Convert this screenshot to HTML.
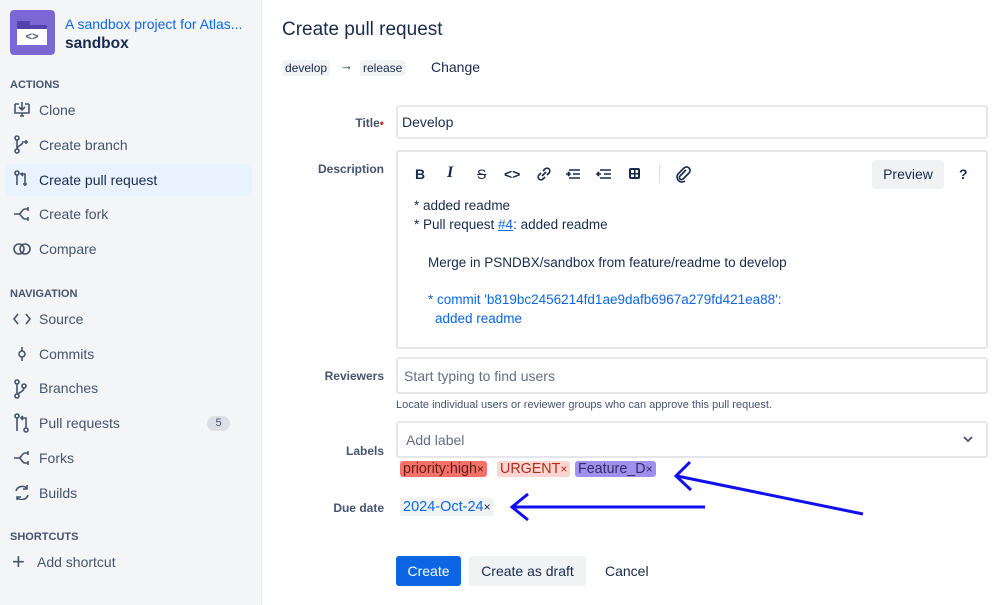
<!DOCTYPE html>
<html><head><style>
*{margin:0;padding:0;box-sizing:border-box}
body{width:999px;height:605px;overflow:hidden;background:#fff;font-family:"Liberation Sans",Arial,sans-serif;color:#172b4d;position:relative}
.a{position:absolute}
#side{position:absolute;left:0;top:0;width:262px;height:605px;background:#f4f5f7;border-right:1px solid #e4e6ea}
.h{font-size:11px;font-weight:bold;color:#44546f;left:10px}
.it{font-size:14px;color:#44546f;left:39px;line-height:18px}
.lab{font-size:12px;font-weight:bold;color:#44546f;text-align:right;width:120px;left:264px}
.inp{left:396px;width:592px;border:2px solid #e4e6ea;border-radius:3px;background:#fff}
.tb{font-size:14px;font-weight:bold;color:#172b4d;top:166px}
.tx{font-size:13.5px;color:#172b4d}
.tag{top:461px;height:16px;font-size:14.3px;line-height:16px;padding:0 3px;border-radius:3px}
</style></head><body>
<div id="side">
<div class="a" style="left:10px;top:10px;width:45px;height:45px;background:#7b68d4;border-radius:4px"></div>
<div class="a" style="left:17px;top:21px;width:13px;height:4px;background:#5243aa"></div>
<div class="a" style="left:17px;top:25px;width:30px;height:4px;background:#5243aa"></div>
<div class="a" style="left:17px;top:29px;width:30px;height:16px;background:#fff;font-size:11px;text-align:center;line-height:16px;color:#44546f;font-weight:bold">&lt;&gt;</div>
<div class="a" style="left:65px;top:16px;font-size:14px;color:#0c66e4">A sandbox project for Atlas...</div>
<div class="a" style="left:65px;top:35px;font-size:15.5px;font-weight:bold;color:#172b4d">sandbox</div>
<div class="a h" style="top:79px">ACTIONS</div>
<div class="a" style="left:5px;top:164px;width:247px;height:32px;background:#e9f2ff;border-radius:3px"></div>
<svg class="a" style="left:12px;top:100px" width="22" height="400" fill="none" stroke="#44546f" stroke-width="1.6">
<path d="M3 4h4M13 4h4M3 4v9h14V4M10 2v7M7 7l3 3 3-3M8 16h4M10 13v3"/>
<circle cx="5" cy="38" r="2"/><circle cx="5" cy="51" r="2"/><path d="M5 40v9M5 49c0-4 6-3 6-8M12 42h4M14 40v4"/>
<circle cx="5" cy="73" r="2"/><path d="M5 75v10M9 74h4v10M11 73l-2 1 2 2M15 84h-4M13 82v4"/>
<path d="M2 114h5M7 114c2 0 3-5 6-5h3M7 114c2 0 3 5 6 5h3M16 107v4M16 117v4"/>
<circle cx="7" cy="149" r="5"/><circle cx="13" cy="149" r="5"/>
<path d="M6 214l-4 5 4 5M14 214l4 5-4 5"/>
<circle cx="10" cy="254" r="3"/><path d="M10 247v4M10 257v4"/>
<circle cx="5" cy="282" r="2"/><circle cx="5" cy="296" r="2"/><circle cx="12" cy="286" r="2"/><path d="M5 284v10M12 288c0 3-4 4-6 6"/>
<circle cx="5" cy="316" r="2"/><circle cx="14" cy="330" r="2"/><path d="M5 318v13M9 318h5v10M11 316l-2 2 2 2"/>
<path d="M2 358h5M7 358c2 0 3-5 6-5h3M7 358c2 0 3 5 6 5h3M16 351v4M16 361v4"/>
<path d="M15 388.5A6.5 6.5 0 0 0 4 391M5 397.5A6.5 6.5 0 0 0 16 395M15 385v4h-4M5 401v-4h4"/>
</svg>
<div class="a it" style="top:101px">Clone</div>
<div class="a it" style="top:136px">Create branch</div>
<div class="a it" style="top:171px;color:#172b4d">Create pull request</div>
<div class="a it" style="top:205px">Create fork</div>
<div class="a it" style="top:240px">Compare</div>
<div class="a h" style="top:288px">NAVIGATION</div>
<div class="a it" style="top:310px">Source</div>
<div class="a it" style="top:345px">Commits</div>
<div class="a it" style="top:379px">Branches</div>
<div class="a it" style="top:414px">Pull requests</div>
<div class="a" style="left:207px;top:416px;width:23px;height:15px;background:#dcdfe4;border-radius:8px;font-size:11px;text-align:center;line-height:15px;color:#44546f">5</div>
<div class="a it" style="top:449px">Forks</div>
<div class="a it" style="top:484px">Builds</div>
<div class="a h" style="top:531px">SHORTCUTS</div>
<div class="a" style="left:12px;top:553px;font-size:22px;line-height:18px;color:#44546f">+</div>
<div class="a it" style="left:37px;top:553px">Add shortcut</div>
</div>

<div class="a" style="left:282px;top:19px;font-size:19px;color:#172b4d">Create pull request</div>
<div class="a" style="left:282px;top:60px;height:16px;padding:0 3px;background:#f1f2f4;border-radius:3px;font-size:12px;line-height:16px">develop</div>
<div class="a" style="left:340px;top:58px;font-size:13px">→</div>
<div class="a" style="left:360px;top:60px;height:16px;padding:0 3px;background:#f1f2f4;border-radius:3px;font-size:12px;line-height:16px">release</div>
<div class="a" style="left:431px;top:59px;font-size:14px">Change</div>

<div class="a lab" style="top:116px">Title<span style="color:#c9372c">•</span></div>
<div class="a inp" style="top:105px;height:34px;font-size:14px;padding:7px 4px">Develop</div>
<div class="a lab" style="top:162px">Description</div>
<div class="a inp" style="top:150px;height:199px"></div>
<div class="a tb" style="left:415px">B</div>
<div class="a tb" style="left:447px;font-style:italic;font-family:'Liberation Serif',serif;font-size:16px;top:164px">I</div>
<div class="a tb" style="left:477px;text-decoration:line-through;font-weight:normal">S</div>
<div class="a tb" style="left:504px">&lt;&gt;</div>
<svg class="a" style="left:535px;top:165px" width="120" height="18" fill="none" stroke="#172b4d" stroke-width="1.6">
<path d="M7 11l4-4M6 8l-2 2a2.5 2.5 0 0 0 4 4l2-2M12 10l2-2a2.5 2.5 0 0 0-4-4L8 6"/>
<path d="M34 5h11M38 9h7M34 13h11M31 9h4M33 7l2 2-2 2"/>
<path d="M65 5h11M69 9h7M65 13h11M62 9h4M64 7l-2 2 2 2"/>
<path d="M141 5l-6 6a2 2 0 0 0 3 3l6-6a3.5 3.5 0 0 0-5-5l-6 6"/>
</svg>
<div class="a" style="left:629px;top:168px;width:11px;height:11px;border:2px solid #172b4d;border-radius:2px;background:linear-gradient(#172b4d,#172b4d) center/100% 1.5px no-repeat,linear-gradient(#172b4d,#172b4d) center/1.5px 100% no-repeat"></div>
<div class="a" style="left:659px;top:165px;width:1px;height:18px;background:#dcdfe4"></div>
<svg class="a" style="left:674px;top:165px" width="18" height="18" fill="none" stroke="#172b4d" stroke-width="1.6"><path d="M12 5l-6 6a2 2 0 0 0 3 3l6-6a3.5 3.5 0 0 0-5-5l-6 6a5 5 0 0 0 7 7"/></svg>
<div class="a" style="left:872px;top:160px;width:72px;height:29px;background:#f1f2f4;border-radius:3px;font-size:14px;text-align:center;line-height:29px">Preview</div>
<div class="a tb" style="left:959px">?</div>
<div class="a tx" style="left:414px;top:198px">* added readme</div>
<div class="a tx" style="left:414px;top:217px">* Pull request <span style="color:#0c66e4;text-decoration:underline">#4</span>: added readme</div>
<div class="a tx" style="left:428px;top:255px">Merge in PSNDBX/sandbox from feature/readme to develop</div>
<div class="a tx" style="left:428px;top:292px;color:#0c66e4">* commit 'b819bc2456214fd1ae9dafb6967a279fd421ea88':</div>
<div class="a tx" style="left:435px;top:311px;color:#0c66e4">added readme</div>

<div class="a lab" style="top:369px">Reviewers</div>
<div class="a inp" style="top:357px;height:37px;font-size:14px;padding:9px 6px;color:#626f86">Start typing to find users</div>
<div class="a" style="left:396px;top:399px;font-size:11px;color:#44546f">Locate individual users or reviewer groups who can approve this pull request.</div>
<div class="a lab" style="top:444px">Labels</div>
<div class="a inp" style="top:421px;height:37px;font-size:14px;padding:9px 8px;color:#626f86">Add label</div>
<svg class="a" style="left:963px;top:435px" width="10" height="8" fill="none" stroke="#44546f" stroke-width="1.8"><path d="M1 2l4 4 4-4"/></svg>
<div class="a tag" style="left:400px;background:#f87168;color:#5d1f1a">priority:high<span style="font-size:12px">×</span></div>
<div class="a tag" style="left:497px;background:#ffd5d2;color:#ae2a19">URGENT<span style="font-size:12px">×</span></div>
<div class="a tag" style="left:575px;background:#9f8fef;color:#352c63">Feature_D<span style="font-size:12px">×</span></div>
<div class="a lab" style="top:501px">Due date</div>
<div class="a tag" style="left:400px;top:498px;height:18px;line-height:18px;background:#f1f2f4;color:#0c66e4;font-size:14.5px">2024-Oct-24<span style="font-size:12px;color:#172b4d">×</span></div>

<svg class="a" style="left:0;top:0" width="999" height="605" fill="none" stroke="#1010ee" stroke-width="3">
<path d="M863 514L677 476M690 462L676 476 691 490"/>
<path d="M705 507H513M528 494L512 507 528 520"/>
</svg>

<div class="a" style="left:396px;top:556px;width:65px;height:30px;background:#0c66e4;border-radius:3px;color:#fff;font-size:14px;text-align:center;line-height:30px">Create</div>
<div class="a" style="left:469px;top:556px;width:117px;height:30px;background:#f1f2f4;border-radius:3px;font-size:14px;text-align:center;line-height:30px">Create as draft</div>
<div class="a" style="left:605px;top:563px;font-size:14px">Cancel</div>
</body></html>
